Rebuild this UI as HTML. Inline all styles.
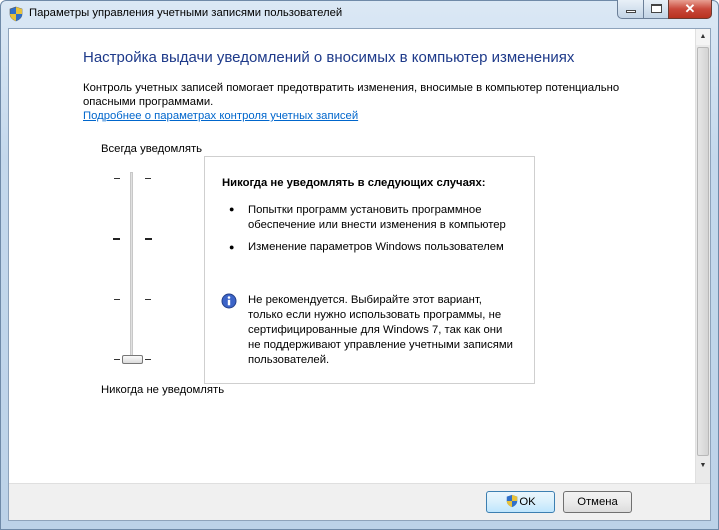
<!DOCTYPE html>
<html><head><meta charset="utf-8"><style>
*{margin:0;padding:0;box-sizing:border-box}
body{width:719px;height:530px;overflow:hidden;background:#fff;font-family:"Liberation Sans",sans-serif;font-size:11.3px;color:#000;position:relative}
.abs{position:absolute}
</style></head><body>
<div class="abs" style="left:0;top:0;width:719px;height:530px;background:linear-gradient(#dbe8f5,#c4d8ec 30%,#bcd2e8);border:1px solid #6f8aa8;border-radius:6px 6px 0 0"></div>
<svg class="abs" style="left:8px;top:6px" width="16" height="16" viewBox="0 0 16 16"><path d="M8 1L14 3V8C14 11.5 11 14 8 15C5 14 2 11.5 2 8V3Z" fill="#2f6fc9" stroke="#555" stroke-width=".6"/><path d="M8 1L14 3V8H8Z" fill="#e7c23b"/><path d="M2 8H8V15C5 14 2 11.5 2 8Z" fill="#e7c23b"/><path d="M8 8H14C14 11.5 11 14 8 15Z" fill="#2f6fc9"/></svg>
<div class="abs" style="left:29px;top:7px;font-size:11.3px;color:#000">Параметры управления учетными записями пользователей</div>
<div class="abs" style="left:617px;top:0;width:27px;height:19px;border:1px solid #6b7f98;border-top:none;border-radius:0 0 0 5px;background:linear-gradient(#e8f0f8,#c3d4e6)"><div style="position:absolute;left:8px;top:10px;width:10px;height:3px;background:#fff;border:1px solid #444"></div></div>
<div class="abs" style="left:643px;top:0;width:26px;height:19px;border:1px solid #6b7f98;border-top:none;background:linear-gradient(#e8f0f8,#c3d4e6)"><div style="position:absolute;left:7px;top:4px;width:11px;height:9px;background:#fff;border:1px solid #444;border-top-width:2px"></div></div>
<div class="abs" style="left:668px;top:0;width:44px;height:19px;border:1px solid #6b3a30;border-top:none;border-radius:0 0 5px 0;background:linear-gradient(#e8a093,#c9483a 50%,#b8321f);color:#fff;font-weight:bold;font-size:13px;text-align:center;line-height:17px">✕</div>
<div class="abs" style="left:8px;top:28px;width:703px;height:493px;background:#fff;border:1px solid #8ea3bb"></div>
<div class="abs" style="left:9px;top:483px;width:701px;height:37px;background:#f0f0f0;border-top:1px solid #dfdfdf"></div>
<div class="abs" style="left:695px;top:29px;width:15px;height:454px;background:#eaeaea;border-left:1px solid #e0e0e0"></div>
<div class="abs" style="left:696px;top:29px;width:14px;height:16px;background:#f4f4f4;font-size:7px;text-align:center;line-height:16px;color:#333">▲</div>
<div class="abs" style="left:697px;top:47px;width:12px;height:409px;background:linear-gradient(90deg,#e6e6e6,#d4d4d4);border:1px solid #b8b8b8;border-radius:2px"></div>
<div class="abs" style="left:696px;top:458px;width:14px;height:16px;font-size:7px;text-align:center;line-height:16px;color:#333">▼</div>
<div class="abs" style="left:83px;top:49px;font-size:15px;color:#1e3a8a">Настройка выдачи уведомлений о вносимых в компьютер изменениях</div>
<div class="abs" style="left:83px;top:81px;width:600px;line-height:14px">Контроль учетных записей помогает предотвратить изменения, вносимые в компьютер потенциально<br>опасными программами.</div>
<div class="abs" style="left:83px;top:110px;color:#0066cc;text-decoration:underline">Подробнее о параметрах контроля учетных записей</div>
<div class="abs" style="left:101px;top:143px">Всегда уведомлять</div>
<div class="abs" style="left:130px;top:172px;width:3px;height:190px;background:#e0e0e0;border:1px solid #c8c8c8"></div>
<div class="abs" style="left:114px;top:178px;width:6px;height:1px;background:#333"></div><div class="abs" style="left:145px;top:178px;width:6px;height:1px;background:#333"></div>
<div class="abs" style="left:113px;top:238px;width:7px;height:2px;background:#222"></div><div class="abs" style="left:145px;top:238px;width:7px;height:2px;background:#222"></div>
<div class="abs" style="left:114px;top:299px;width:6px;height:1px;background:#333"></div><div class="abs" style="left:145px;top:299px;width:6px;height:1px;background:#333"></div>
<div class="abs" style="left:114px;top:359px;width:6px;height:1px;background:#333"></div><div class="abs" style="left:145px;top:359px;width:6px;height:1px;background:#333"></div>
<div class="abs" style="left:122px;top:355px;width:21px;height:9px;background:linear-gradient(#fafafa,#dcdcdc);border:1px solid #777;border-radius:2px"></div>
<div class="abs" style="left:101px;top:384px">Никогда не уведомлять</div>
<div class="abs" style="left:204px;top:156px;width:331px;height:228px;border:1px solid #cfcfcf"></div>
<div class="abs" style="left:222px;top:177px;font-weight:bold">Никогда не уведомлять в следующих случаях:</div>
<div class="abs" style="left:229px;top:204px;font-size:9px">●</div>
<div class="abs" style="left:248px;top:203px;line-height:15px">Попытки программ установить программное<br>обеспечение или внести изменения в компьютер</div>
<div class="abs" style="left:229px;top:242px;font-size:9px">●</div>
<div class="abs" style="left:248px;top:241px">Изменение параметров Windows пользователем</div>
<svg class="abs" style="left:221px;top:293px" width="16" height="16" viewBox="0 0 16 16"><circle cx="8" cy="8" r="7" fill="#3c64c8" stroke="#24408a"/><circle cx="8" cy="4.5" r="1.3" fill="#fff"/><rect x="6.8" y="6.8" width="2.4" height="5.5" fill="#fff"/></svg>
<div class="abs" style="left:248px;top:293px;line-height:15px">Не рекомендуется. Выбирайте этот вариант,<br>только если нужно использовать программы, не<br>сертифицированные для Windows 7, так как они<br>не поддерживают управление учетными записями<br>пользователей.</div>
<div class="abs" style="left:486px;top:491px;width:69px;height:22px;border:1px solid #3c7fb1;border-radius:3px;background:linear-gradient(#eaf6fd,#d9f0fc 50%,#bee6fd);text-align:center;line-height:20px"><svg style="vertical-align:-3px" width="14" height="14" viewBox="0 0 16 16"><path d="M8 1L14 3V8C14 11.5 11 14 8 15C5 14 2 11.5 2 8V3Z" fill="#2f6fc9"/><path d="M8 1L14 3V8H8Z" fill="#e7c23b"/><path d="M2 8H8V15C5 14 2 11.5 2 8Z" fill="#e7c23b"/></svg>OK</div>
<div class="abs" style="left:563px;top:491px;width:69px;height:22px;border:1px solid #707070;border-radius:3px;background:linear-gradient(#f2f2f2,#ebebeb 50%,#dcdcdc);text-align:center;line-height:20px">Отмена</div>
</body></html>
